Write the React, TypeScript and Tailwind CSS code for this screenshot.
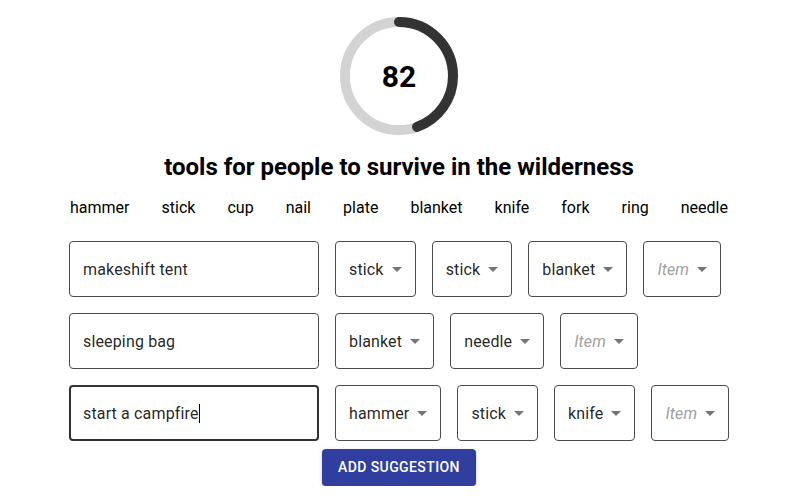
import React from "react";

const words = ["hammer", "stick", "cup", "nail", "plate", "blanket", "knife", "fork", "ring", "needle"];

const rows: { label: string; focused?: boolean; items: (string | null)[] }[] = [
  { label: "makeshift tent", items: ["stick", "stick", "blanket", null] },
  { label: "sleeping bag", items: ["blanket", "needle", null] },
  { label: "start a campfire", focused: true, items: ["hammer", "stick", "knife", null] },
];

function Ring() {
  const r = 54;
  const c = 2 * Math.PI * r;
  const frac = 0.445;
  return (
    <div className="relative w-[120px] h-[120px]">
      <svg width="120" height="120" viewBox="0 0 120 120">
        <circle cx="60" cy="60" r={r} fill="none" stroke="#d3d3d3" strokeWidth="10" />
        <circle
          cx="60"
          cy="60"
          r={r}
          fill="none"
          stroke="#333333"
          strokeWidth="10"
          strokeLinecap="round"
          strokeDasharray={`${c * frac} ${c}`}
          transform="rotate(-90 60 60)"
        />
      </svg>
      <div className="absolute inset-0 flex items-center justify-center text-[30px] font-bold text-black">82</div>
    </div>
  );
}

function Select({ value }: { value: string | null }) {
  return (
    <div className="relative shrink-0 h-[56px] flex items-center pt-[1px] pl-[13px] pr-[31px] rounded-[4px] border border-[#4b4b4b] text-[16px] tracking-[0.15px]">
      {value ? (
        <span className="text-[rgba(0,0,0,0.87)]">{value}</span>
      ) : (
        <span className="italic text-[#a0a0a0]">Item</span>
      )}
      <svg className="absolute right-[6px] top-1/2 -translate-y-1/2" width="24" height="24" viewBox="0 0 24 24">
        <path d="M7 10l5 5 5-5z" fill="#757575" />
      </svg>
    </div>
  );
}

export default function App() {
  return (
    <div className="w-[798px] flex flex-col items-center pt-[16px] bg-white" style={{ fontFamily: "Roboto, 'Liberation Sans', sans-serif" }}>
      <Ring />
      <h1 className="mt-[15px] text-[24px] leading-[32px] font-bold text-black">
        tools for people to survive in the wilderness
      </h1>
      <div className="mt-[13px] w-[660px] flex justify-between px-[1px] text-[16px] leading-[24px] text-black">
        {words.map((w) => (
          <span key={w}>{w}</span>
        ))}
      </div>
      <div className="mt-[21px] w-[660px] flex flex-col gap-[16px]">
        {rows.map((row) => (
          <div key={row.label} className="flex gap-[16px]">
            <div
              className={
                row.focused
                  ? "shrink-0 w-[250px] h-[56px] flex items-center pt-[1px] px-[12px] rounded-[4px] border-2 border-[#333333] text-[16px] tracking-[0.15px] text-[rgba(0,0,0,0.87)]"
                  : "shrink-0 w-[250px] h-[56px] flex items-center pt-[1px] px-[13px] rounded-[4px] border border-[#4b4b4b] text-[16px] tracking-[0.15px] text-[rgba(0,0,0,0.87)]"
              }
            >
              <span>{row.label}</span>
              {row.focused && <span className="w-[1px] h-[19px] bg-black" />}
            </div>
            {row.items.map((it, i) => (
              <Select key={i} value={it} />
            ))}
          </div>
        ))}
      </div>
      <button className="mt-[8px] h-[37px] px-[16px] rounded-[4px] bg-[#303f9f] text-white text-[14px] font-medium tracking-[0.4px] uppercase shadow-[0_3px_1px_-2px_rgba(0,0,0,0.2),0_2px_2px_0_rgba(0,0,0,0.14),0_1px_5px_0_rgba(0,0,0,0.12)]">
        Add Suggestion
      </button>
    </div>
  );
}
